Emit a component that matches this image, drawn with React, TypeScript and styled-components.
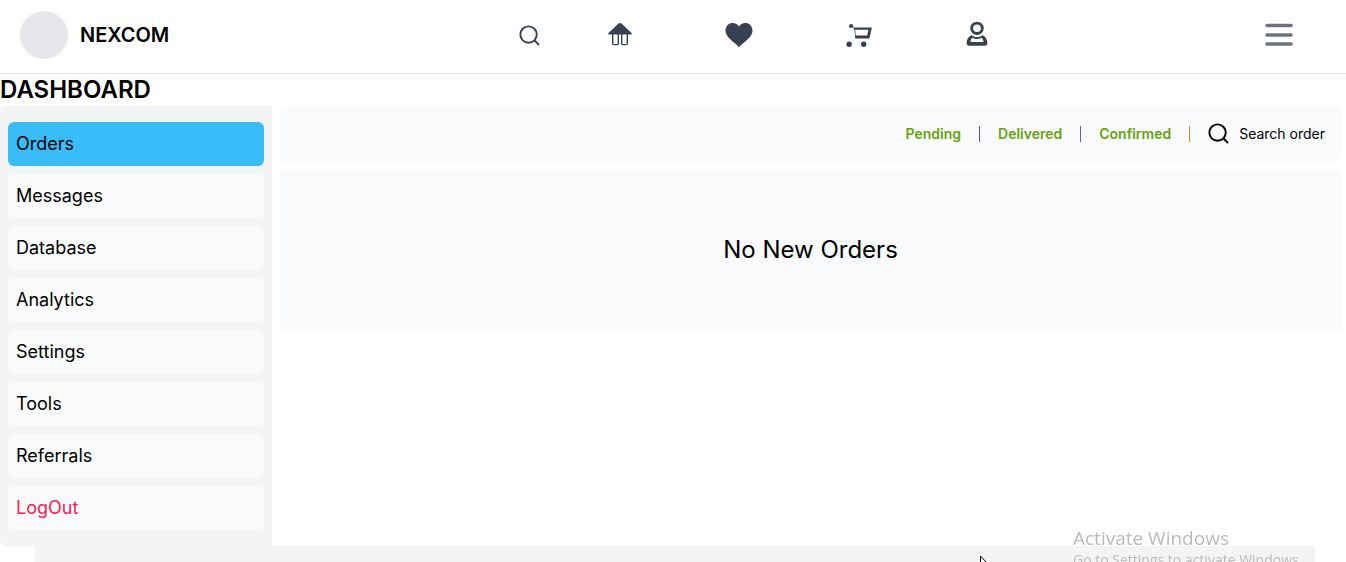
import React, { useState } from "react";
import styled, { createGlobalStyle } from "styled-components";

const GlobalStyle = createGlobalStyle`
  *, *::before, *::after { box-sizing: border-box; }
  body {
    margin: 0;
    background: #fff;
    color: #000;
    font-family: Inter, "Liberation Sans", sans-serif;
    font-size: 16px;
    line-height: 24px;
  }
  button, input { font: inherit; color: inherit; }
  h1, h2, p, ul { margin: 0; padding: 0; }
  ul { list-style: none; }
`;

const Page = styled.div`
  display: flex;
  flex-direction: column;
  min-height: 100vh;
`;

const Header = styled.header`
  display: grid;
  grid-template-columns: 33fr auto 20fr;
  align-items: center;
  padding: 11px 52px 14px 20px;
  border-bottom: 1px solid #e5e7eb;
`;

const Brand = styled.a`
  display: flex;
  align-items: center;
  gap: 12px;
  color: #000;
  font-size: 20px;
  font-weight: 600;
  line-height: 28px;
  text-decoration: none;
`;

const Avatar = styled.span`
  width: 48px;
  height: 48px;
  border-radius: 50%;
  background: #e5e7eb;
`;

const Nav = styled.nav`
  display: flex;
  align-items: center;
  gap: 66px;
`;

const NavLinks = styled.div`
  display: flex;
  gap: 91px;
`;

const IconButton = styled.button`
  display: flex;
  padding: 0;
  border: 0;
  background: none;
  color: #374151;
  cursor: pointer;
`;

const IconLink = styled.a`
  display: flex;
  color: #374151;
`;

const MenuButton = styled(IconButton)`
  justify-self: end;
  color: #6b7280;
`;

const Title = styled.h1`
  font-size: 24px;
  font-weight: 600;
  line-height: 32px;
`;

const Body = styled.div`
  display: flex;
  gap: 8px;
  padding-right: 5px;
`;

const Sidebar = styled.ul`
  display: flex;
  flex-direction: column;
  flex: none;
  gap: 8px;
  width: 272px;
  padding: 16px 8px;
  border-radius: 6px 0 0 6px;
  background: #f3f4f6;
`;

const SideButton = styled.button<{ $active?: boolean; $danger?: boolean }>`
  display: block;
  width: 100%;
  padding: 8px;
  border: 0;
  border-radius: 6px;
  background: ${(p) => (p.$active ? "#38bdf8" : "#f9fafb")};
  color: ${(p) => (p.$danger ? "#f4214f" : "#000")};
  font-size: 18px;
  line-height: 28px;
  text-align: left;
  cursor: pointer;
`;

const Main = styled.main`
  display: flex;
  flex: 1;
  flex-direction: column;
  gap: 8px;
  min-width: 0;
`;

const Toolbar = styled.div`
  display: flex;
  align-items: center;
  justify-content: flex-end;
  gap: 16px;
  padding: 17px 16px 18px;
  border-radius: 6px;
  background: #f9fafb;
  font-size: 14px;
  line-height: 20px;
`;

const Filter = styled.button`
  padding: 0;
  border: 0;
  background: none;
  color: #65a30d;
  font-weight: 600;
  cursor: pointer;
`;

const Divider = styled.span<{ $color: string }>`
  width: 1px;
  height: 16px;
  margin: 0 2px;
  background: ${(p) => p.$color};
`;

const SearchButton = styled.button`
  display: flex;
  align-items: center;
  gap: 10px;
  padding: 0;
  border: 0;
  background: none;
  cursor: pointer;
`;

const Empty = styled.section`
  padding: 64px 16px;
  background: #f9fafb;
  text-align: center;
`;

const EmptyText = styled.p`
  font-size: 24px;
  line-height: 32px;
`;

const Footer = styled.footer`
  flex: 1;
  margin: 0 31px 0 35px;
  background: #f3f4f6;
`;

const Watermark = styled.aside`
  position: fixed;
  right: 40px;
  bottom: -8px;
  width: 233px;
  color: #b9babc;
  font-family: "Open Sans", "Noto Sans", sans-serif;
  font-size: 14px;
  line-height: 20px;
  white-space: nowrap;
  pointer-events: none;
`;

const WatermarkTitle = styled.p`
  font-size: 19px;
  line-height: 24px;
`;

const Pointer = styled.svg`
  position: fixed;
  left: 980px;
  bottom: -12px;
  pointer-events: none;
`;

const SearchIcon = ({ size, stroke }: { size: number; stroke: number }) => (
  <svg width={size} height={size} viewBox="0 0 22 22" fill="none" stroke="currentColor" strokeWidth={stroke} aria-hidden="true">
    <circle cx="10" cy="10" r="8.6" />
    <path d="M16 16l5 5" />
  </svg>
);

const HomeIcon = () => (
  <svg width="28" height="28" viewBox="0 0 28 28" aria-hidden="true">
    <path fill="currentColor" d="M14 2c.6 0 1 .2 1.500.6L25.500 12c.7.7.4 1.500-.6 1.500H3.100c-1 0-1.300-.8-.6-1.500L12.500 2.600c.5-.4.900-.6 1.500-.6z" />
    <path fill="none" stroke="currentColor" strokeWidth="1.400" d="M6.700 12v10.500q0 1.100 1.100 1.100h3.400q1.100 0 1.100-1.100V13M15.700 13v9.500q0 1.100 1.100 1.100h3.400q1.100 0 1.100-1.100V12" />
  </svg>
);

const HeartIcon = () => (
  <svg width="28" height="28" viewBox="0 0 28 28" fill="currentColor" aria-hidden="true">
    <path d="M14 26.200C11.500 22.500 0 16.500 .5 9.500C.8 4.500 4 2 7.500 2c3 0 5.200 1.300 6.500 3.400C15.300 3.300 17.500 2 20.500 2c3.500 0 6.700 2.500 7 7.500C28 16.500 16.500 22.500 14 26.200z" />
  </svg>
);

const CartIcon = () => (
  <svg width="28" height="28" viewBox="-1.500 0 28 28" fill="currentColor" aria-hidden="true">
    <circle cx="5.600" cy="5" r="2.100" />
    <path d="M6.500 4.500l2.500 2.500 1.300 9.700" fill="none" stroke="currentColor" strokeWidth=".7" />
    <path fillRule="evenodd" d="M8 6.500H26.400L23.900 17.500H9.800L9.600 14.600H21.700L22.900 8.700H8.500z" />
    <circle cx="3.600" cy="23.300" r="2.700" />
    <circle cx="18.200" cy="23.300" r="2.700" />
  </svg>
);

const UserIcon = () => (
  <svg width="28" height="28" viewBox="0 0 28 28" fill="none" stroke="currentColor" aria-hidden="true">
    <ellipse cx="14" cy="7.300" rx="5.300" ry="5.200" strokeWidth="2.800" />
    <path fill="currentColor" stroke="none" fillRule="evenodd" d="M8.500 14c-3 1.500-4.900 4.600-4.900 7.900 0 1.700 1 2.800 2.800 2.800h15.200c1.800 0 2.800-1.100 2.800-2.800 0-3.300-1.900-6.400-4.900-7.900-2.600 2.700-8.400 2.700-11 0zM9.300 16.800c3 1.600 6.400 1.600 9.400 0 1.100 1.200 1.700 2.600 1.900 4.200H7.400c.2-1.600.8-3 1.900-4.200z" />
  </svg>
);

const MenuIcon = () => (
  <svg width="30" height="28" viewBox="0 0 30 28" fill="none" stroke="currentColor" strokeWidth="3.600" strokeLinecap="round" aria-hidden="true">
    <path d="M3 4.500h24M3 14h24M3 23h24" />
  </svg>
);

const items = ["Orders", "Messages", "Database", "Analytics", "Settings", "Tools", "Referrals", "LogOut"];

const filters = [
  { label: "Pending", color: "#57606b" },
  { label: "Delivered", color: "#4d6a9a" },
  { label: "Confirmed", color: "#c58a2b" },
];

export default function App() {
  const [active, setActive] = useState("Orders");

  return (
    <>
      <GlobalStyle />
      <Page>
        <Header>
          <Brand href="#">
            <Avatar />
            NEXCOM
          </Brand>
          <Nav aria-label="Primary">
            <IconButton type="button" aria-label="Search">
              <SearchIcon size={21} stroke={2} />
            </IconButton>
            <NavLinks>
              <IconLink href="#home" aria-label="Home"><HomeIcon /></IconLink>
              <IconLink href="#favourites" aria-label="Favourites"><HeartIcon /></IconLink>
              <IconLink href="#cart" aria-label="Cart"><CartIcon /></IconLink>
              <IconLink href="#account" aria-label="Account"><UserIcon /></IconLink>
            </NavLinks>
          </Nav>
          <MenuButton type="button" aria-label="Menu"><MenuIcon /></MenuButton>
        </Header>
        <Title>DASHBOARD</Title>
        <Body>
          <Sidebar>
            {items.map((item) => (
              <li key={item}>
                <SideButton
                  type="button"
                  $active={item === active}
                  $danger={item === "LogOut"}
                  onClick={() => setActive(item)}
                >
                  {item}
                </SideButton>
              </li>
            ))}
          </Sidebar>
          <Main>
            <Toolbar>
              {filters.map(({ label, color }) => (
                <React.Fragment key={label}>
                  <Filter type="button">{label}</Filter>
                  <Divider $color={color} />
                </React.Fragment>
              ))}
              <SearchButton type="button">
                <SearchIcon size={21} stroke={2} />
                Search order
              </SearchButton>
            </Toolbar>
            <Empty>
              <EmptyText>No New Orders</EmptyText>
            </Empty>
          </Main>
        </Body>
        <Footer />
      </Page>
      <Watermark>
        <WatermarkTitle>Activate Windows</WatermarkTitle>
        <p>Go to Settings to activate Windows.</p>
      </Watermark>
      <Pointer width="12" height="19" viewBox="0 0 12 19" fill="#fff" stroke="#000" aria-hidden="true">
        <path d="M.5 1v15l3.500-3.300 2.300 5.300 2-1-2.300-5h4.600z" />
      </Pointer>
    </>
  );
}
